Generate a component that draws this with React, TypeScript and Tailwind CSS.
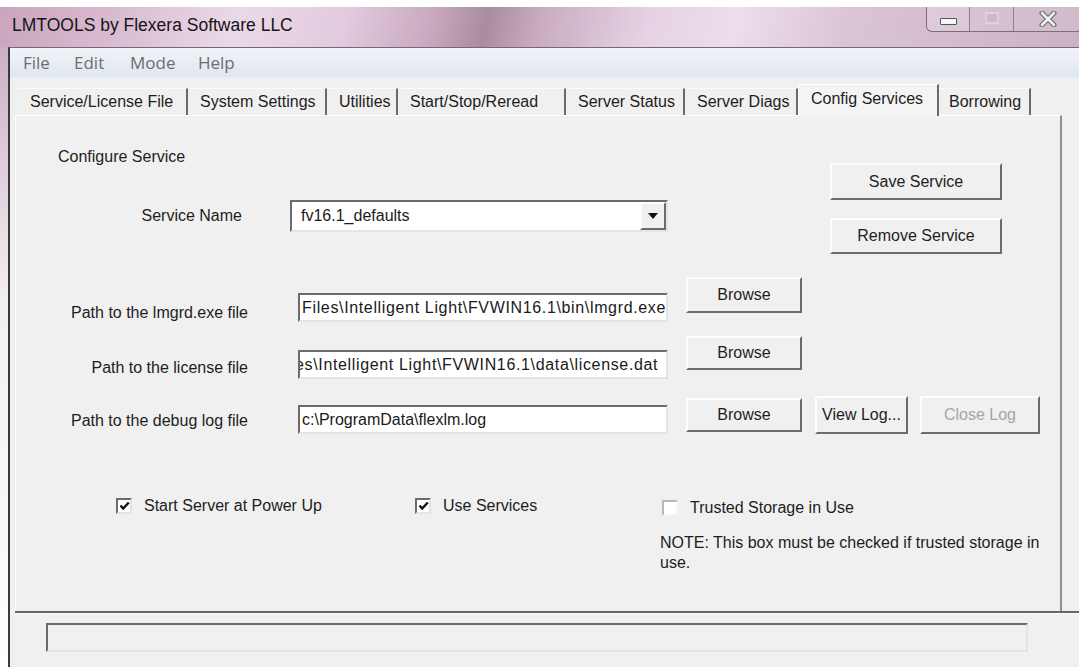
import React from 'react';

// classic 3D edges used by the Win32 controls
const sunken =
  'border-2 border-t-[#6b6b6b] border-l-[#6b6b6b] border-r-[#e4e4e4] border-b-[#e4e4e4]';
const raised =
  'border-2 border-t-[#fdfdfd] border-l-[#fdfdfd] border-r-[#6b6b6b] border-b-[#6b6b6b]';

type ButtonProps = { label: string; className?: string; disabled?: boolean };

const Button = ({ label, className = '', disabled = false }: ButtonProps) => (
  <button
    type="button"
    className={`${raised} bg-[#f0f0f0] flex items-center justify-center text-[16px] leading-none ${
      disabled ? 'text-[#a5a5a5]' : 'text-[#1e1e1e]'
    } ${className}`}
  >
    {label}
  </button>
);

type CheckProps = { label: string; checked: boolean };

const CheckBox = ({ label, checked }: CheckProps) => (
  <div className="flex items-center h-[20px]">
    <span
      className={`w-[16px] h-[16px] bg-white flex items-center justify-center ${
        checked
          ? sunken
          : 'border-2 border-t-[#b8b8b8] border-l-[#b8b8b8] border-r-[#f5f5f5] border-b-[#f5f5f5]'
      }`}
    >
      {checked && (
        <svg width="11" height="10" viewBox="0 0 11 10">
          <path d="M1.5 4.5 L4.2 7.5 L9.8 1.5" stroke="#111" strokeWidth="2.4" fill="none" />
        </svg>
      )}
    </span>
    <span className="ml-[12px] text-[16px] text-[#1d1d1d] whitespace-nowrap">{label}</span>
  </div>
);

type PathRowProps = {
  label: string;
  value: string;
  labelTop: string;
  inputTop: string;
  inputClass: string;
  browseTop: string;
  browseH: string;
  extra?: React.ReactNode;
  rowTop: string;
};

const PathRow = ({
  label,
  value,
  labelTop,
  inputTop,
  inputClass,
  browseTop,
  browseH,
  extra,
  rowTop,
}: PathRowProps) => (
  <div className={`flex items-start ${rowTop}`}>
    <div className={`w-[232px] text-right text-[16px] leading-[20px] text-[#1d1d1d] ${labelTop}`}>
      {label}
    </div>
    <div
      className={`ml-[50px] w-[370px] h-[29px] bg-white ${sunken} overflow-hidden flex items-center ${inputTop}`}
    >
      <span className={`whitespace-nowrap text-[16px] text-[#1a1a1a] ${inputClass}`}>{value}</span>
    </div>
    <Button label="Browse" className={`ml-[18px] w-[116px] ${browseH} ${browseTop}`} />
    {extra}
  </div>
);

const tabs = [
  { name: 'Service/License File', w: 'w-[170px]' },
  { name: 'System Settings', w: 'w-[139px]' },
  { name: 'Utilities', w: 'w-[71px]' },
  { name: 'Start/Stop/Reread', w: 'w-[168px]' },
  { name: 'Server Status', w: 'w-[119px]' },
  { name: 'Server Diags', w: 'w-[113px]' },
];

const App = () => {
  return (
    <div className="w-[1079px] h-[667px] overflow-hidden bg-white flex flex-col font-['Liberation_Sans',Arial,sans-serif]">
      <div className="h-[7px] shrink-0 bg-white" />

      {/* title bar */}
      <div className="h-[40px] shrink-0 flex justify-between bg-[linear-gradient(103deg,#c9a6bd_0%,#d8b9cf_10%,#ead9e9_22%,#e3cade_32%,#c9a9bf_40%,#a98c9d_45%,#caacc1_50%,#e6d2e4_60%,#ecdeec_68%,#dcc4d7_78%,#d3bacd_90%,#cbb3c5_100%)]">
        <div className="pl-[12px] pt-[8px] text-[17.5px] leading-[20px] text-[#151515]">
          LMTOOLS by Flexera Software LLC
        </div>
        <div className="flex h-[25px] mr-[-4px] border border-t-0 border-[#7d6f79] rounded-b-[6px] overflow-hidden">
          <div className="w-[43px] flex justify-center bg-white/20 border-r border-[#8e8089]">
            <span className="mt-[11px] w-[17px] h-[7px] bg-[#f6f6f6] border border-[#555] rounded-[1px]" />
          </div>
          <div className="w-[44px] flex justify-center bg-white/10 border-r border-[#8e8089]">
            <span className="mt-[5px] w-[14px] h-[12px] border-[2px] border-[#dcd2da] bg-[#cbbcc7]" />
          </div>
          <div className="w-[68px] flex justify-center items-center bg-white/10">
            <svg width="18" height="16" viewBox="0 0 18 16">
              <path d="M3 2 L15 14 M15 2 L3 14" stroke="#6f6f6f" strokeWidth="5" strokeLinecap="round" />
              <path d="M3 2 L15 14 M15 2 L3 14" stroke="#f2f2f2" strokeWidth="2.6" strokeLinecap="round" />
            </svg>
          </div>
        </div>
      </div>

      <div className="flex flex-1">
        {/* window frame, left side */}
        <div className="w-[8px] shrink-0 bg-[linear-gradient(#cdb0c4,#f3eef2_40%,#ffffff)]" />

        <div className="flex-1 flex flex-col bg-[#f0f0f0] border-l-2 border-[#3b3b3b] border-t border-t-[#716a6e]">
          {/* menu bar */}
          <div className="h-[30px] shrink-0 flex items-center pl-[13px] bg-[linear-gradient(#f1f4f9,#dfe6ef)] border-b border-[#e9edf3] font-['Open_Sans',sans-serif] text-[17px] text-[#6d6d6d]">
            <span className="w-[51px]">File</span>
            <span className="w-[56px]">Edit</span>
            <span className="w-[68px]">Mode</span>
            <span>Help</span>
          </div>

          {/* tab strip */}
          <div className="h-[37px] shrink-0 flex items-end pl-[8px]">
            {tabs.map((t) => (
              <div
                key={t.name}
                className={`${t.w} h-[27px] flex items-center pl-[12px] text-[16px] text-[#1d1d1d] whitespace-nowrap border-t border-t-[#fbfbfb] border-r-2 border-r-[#6a6a6a]`}
              >
                {t.name}
              </div>
            ))}
            <div className="w-[141px] h-[32px] mb-[-1px] relative z-10 flex items-center pl-[12px] pb-[3px] text-[16px] text-[#1d1d1d] whitespace-nowrap bg-[#f4f4f4] border-t border-l border-white border-r-2 border-r-[#6a6a6a]">
              Config Services
            </div>
            <div className="w-[92px] h-[27px] flex items-center pl-[10px] text-[16px] text-[#1d1d1d] border-t border-t-[#fbfbfb] border-r-2 border-r-[#6a6a6a]">
              Borrowing
            </div>
          </div>

          {/* Config Services page */}
          <div className="ml-[5px] w-[1047px] h-[496px] shrink-0 bg-[#f0f0f0] border-t border-l border-white border-r-2 border-r-[#8f8f8f] text-[#1d1d1d]">
            <div className="flex">
              <div className="w-[814px]">
                <div className="pl-[42px] mt-[31px] text-[16px] leading-[20px]">Configure Service</div>
                <div className="mt-[33px] flex items-center h-[32px]">
                  <div className="w-[226px] text-right text-[16px]">Service Name</div>
                  <div className={`ml-[48px] w-[378px] h-[32px] bg-white ${sunken} flex items-center`}>
                    <span className="flex-1 pl-[9px] text-[16px] text-[#1a1a1a]">fv16.1_defaults</span>
                    <div className={`w-[26px] h-full ${raised} bg-[#f0f0f0] flex items-center justify-center`}>
                      <svg width="10" height="6" viewBox="0 0 10 6">
                        <path d="M0 0 H10 L5 6 Z" fill="#111" />
                      </svg>
                    </div>
                  </div>
                </div>
              </div>
              <div className="pt-[47px] flex flex-col">
                <Button label="Save Service" className="w-[172px] h-[37px]" />
                <Button label="Remove Service" className="mt-[18px] w-[172px] h-[36px]" />
              </div>
            </div>

            <PathRow
              rowTop="mt-[23px]"
              label="Path to the lmgrd.exe file"
              labelTop="mt-[26px]"
              value="Files\Intelligent Light\FVWIN16.1\bin\lmgrd.exe"
              inputTop="mt-[16px]"
              inputClass="pl-[2px] tracking-[0.65px]"
              browseTop="mt-0"
              browseH="h-[36px]"
            />
            <PathRow
              rowTop="mt-[13px]"
              label="Path to the license file"
              labelTop="mt-[22px]"
              value="es\Intelligent Light\FVWIN16.1\data\license.dat"
              inputTop="mt-[14px]"
              inputClass="ml-[-5px] tracking-[0.65px]"
              browseTop="mt-0"
              browseH="h-[34px]"
            />
            <PathRow
              rowTop="mt-[17px]"
              label="Path to the debug log file"
              labelTop="mt-[15px]"
              value="c:\ProgramData\flexlm.log"
              inputTop="mt-[9px]"
              inputClass="pl-[2px]"
              browseTop="mt-[2px]"
              browseH="h-[34px]"
              extra={
                <>
                  <Button label="View Log..." className="ml-[13px] w-[93px] h-[38px]" />
                  <Button label="Close Log" disabled className="ml-[12px] w-[120px] h-[38px]" />
                </>
              }
            />

            <div className="mt-[62px] flex items-start">
              <div className="w-[399px] pl-[100px]">
                <CheckBox label="Start Server at Power Up" checked />
              </div>
              <div className="w-[247px]">
                <CheckBox label="Use Services" checked />
              </div>
              <div className="mt-[2px] flex flex-col">
                <CheckBox label="Trusted Storage in Use" checked={false} />
                <p className="mt-[15px] ml-[-2px] w-[395px] text-[16px] leading-[20px]">
                  NOTE: This box must be checked if trusted storage in use.
                </p>
              </div>
            </div>
          </div>

          {/* status bar */}
          <div className="ml-[5px] h-[2px] shrink-0 bg-[#666]" />
          <div className="ml-[5px] h-px shrink-0 bg-white" />
          <div className={`ml-[36px] mt-[9px] w-[982px] h-[29px] shrink-0 ${sunken} bg-[#f0f0f0]`} />
        </div>
      </div>
    </div>
  );
};

export default App;
